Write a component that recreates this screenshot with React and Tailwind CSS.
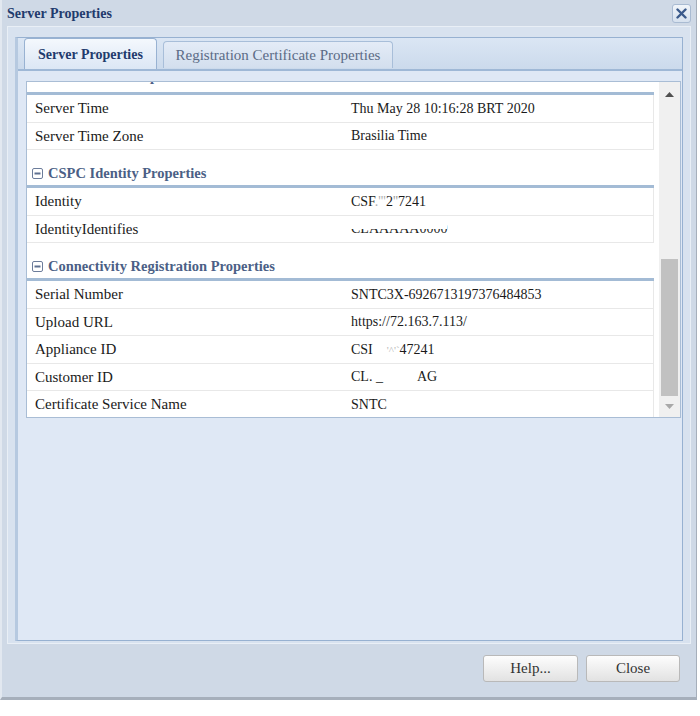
import React from 'react'

const serif = { fontFamily: '"Liberation Serif", "DejaVu Serif", serif' }

const Row = ({ label, children }) => (
  <div className="flex h-[27.5px] items-center border-b border-r border-[#e8e8e8] text-[#1a1a1a]">
    <div className="w-[324px] pl-[8px] text-[15px]">{label}</div>
    <div className="flex-1 text-[14px]">{children}</div>
  </div>
)

const GroupHeader = ({ title, clipped }) => (
  <div
    className={
      'flex h-[38px] items-end gap-[5px] border-b-[3px] border-[#a3bbd5] pl-[5px] text-[14.5px] font-bold text-[#4b5f86] ' +
      (clipped ? 'pb-[7px]' : 'pb-[3px]')
    }
  >
    <svg width="11" height="11" viewBox="0 0 11 11" className="mb-[3px]">
      <rect x="0.5" y="0.5" width="10" height="10" rx="1.5" fill="#fff" stroke="#6c7d9b" />
      <rect x="2.5" y="4.5" width="6" height="2" fill="#5f7191" />
    </svg>
    <span className="leading-[18px]">{title}</span>
  </div>
)

const Scrollbar = () => (
  <div className="flex w-[21px] shrink-0 flex-col bg-[#f0f0f0]">
    <div className="flex h-[24px] items-center justify-center">
      <svg width="9" height="5" viewBox="0 0 9 5"><path d="M0 5 L4.5 0 L9 5 Z" fill="#505050" /></svg>
    </div>
    <div className="h-[153px]" />
    <div className="mx-[2px] h-[137px] bg-[#c1c1c1]" />
    <div className="flex flex-1 items-center justify-center">
      <svg width="9" height="5" viewBox="0 0 9 5"><path d="M0 0 L9 0 L4.5 5 Z" fill="#a8a8a8" /></svg>
    </div>
  </div>
)

const App = () => {
  return (
    <div className="h-[716px] w-[700px] bg-white" style={serif}>
      <div className="flex h-[700px] w-[697px] flex-col border-b-[3px] border-r border-l-2 border-[#a6afbb] border-l-[#e2e8f0] bg-[#cfd9e6]">
        {/* title bar */}
        <div className="flex h-[26px] items-center justify-between pl-[5px] pr-[5px]">
          <span className="text-[14px] font-bold text-[#1f3b6d]">Server Properties</span>
          <button className="flex h-[19px] w-[19px] items-center justify-center rounded-[3px] border border-[#a9bbd2] bg-gradient-to-b from-[#f1f5fa] to-[#d6e1ee]">
            <svg width="11" height="11" viewBox="0 0 11 11">
              <path d="M1.5 1.5 L9.5 9.5 M9.5 1.5 L1.5 9.5" stroke="#3b5a8b" strokeWidth="2.4" strokeLinecap="round" />
            </svg>
          </button>
        </div>

        {/* body */}
        <div className="mx-[5px] flex h-[618px] flex-col border border-[#e9eff6] bg-[#d8e2ef] px-[7px] pt-[10px] pb-[2px]">
          <div className="flex flex-1 flex-col border border-[#97b1d1] border-l-[3px] border-l-[#b6c9e0] bg-[#dfe8f5]">
            {/* tab strip */}
            <div className="flex h-[33px] items-end gap-[6px] border-b-[2px] border-[#9fb8d6] bg-gradient-to-b from-[#dbe6f4] to-[#cbdaec] pl-[6px]">
              <div className="flex h-[31px] w-[133px] items-center justify-center rounded-t-[4px] border border-b-0 border-[#98b2d2] bg-gradient-to-b from-[#f4f8fd] to-[#dce7f5] text-[14px] font-bold text-[#1f3b6d]">
                Server Properties
              </div>
              <div className="mb-[1px] flex h-[27px] w-[230px] items-center justify-center rounded-t-[4px] border border-b-0 border-[#a8bed9] bg-gradient-to-b from-[#e4ecf7] to-[#d3dfee] text-[15px] text-[#5b6b86]">
                Registration Certificate Properties
              </div>
            </div>

            {/* grid */}
            <div className="pl-[8px] pr-[1px] pt-[10px]">
              <div className="flex h-[337px] border border-[#a9bdd5] bg-white">
                <div className="w-[627px] shrink-0 overflow-hidden">
                  <div className="-mt-[25px]">
                    <GroupHeader title="Server Time Properties" clipped />
                    <Row label="Server Time">Thu May 28 10:16:28 BRT 2020</Row>
                    <Row label="Server Time Zone">Brasilia Time</Row>
                    <GroupHeader title="CSPC Identity Properties" />
                    <Row label="Identity">
                      CSF<span className="text-[#b0b0b0]">.'''</span>2<span className="text-[#999]">''</span>7241
                    </Row>
                    <Row label="IdentityIdentifies">
                      <span className="relative inline-block">
                        CLAAAAA0000
                        <span className="absolute left-0 top-0 h-[11px] w-full bg-white" />
                      </span>
                    </Row>
                    <GroupHeader title="Connectivity Registration Properties" />
                    <Row label="Serial Number">SNTC3X-6926713197376484853</Row>
                    <Row label="Upload URL">https://72.163.7.113/</Row>
                    <Row label="Appliance ID">
                      CSI<span className="ml-[14px] text-[11px] text-[#b8b8b8]">'^'`</span>47241
                    </Row>
                    <Row label="Customer ID">
                      CL. _<span className="inline-block w-[34px]" />AG
                    </Row>
                    <Row label="Certificate Service Name">SNTC</Row>
                  </div>
                </div>
                <div className="w-[5px] shrink-0" />
                <Scrollbar />
              </div>
            </div>
          </div>
        </div>

        {/* footer */}
        <div className="flex flex-1 items-start justify-end gap-[8px] pr-[16px] pt-[11px]">
          <button className="h-[27px] w-[95px] rounded-[3px] border border-[#b9b9b9] bg-gradient-to-b from-[#fdfdfd] to-[#e2e2e2] text-[15px] text-[#333]">
            Help...
          </button>
          <button className="h-[27px] w-[94px] rounded-[3px] border border-[#b9b9b9] bg-gradient-to-b from-[#fdfdfd] to-[#e2e2e2] text-[15px] text-[#333]">
            Close
          </button>
        </div>
      </div>
    </div>
  )
}

export default App
